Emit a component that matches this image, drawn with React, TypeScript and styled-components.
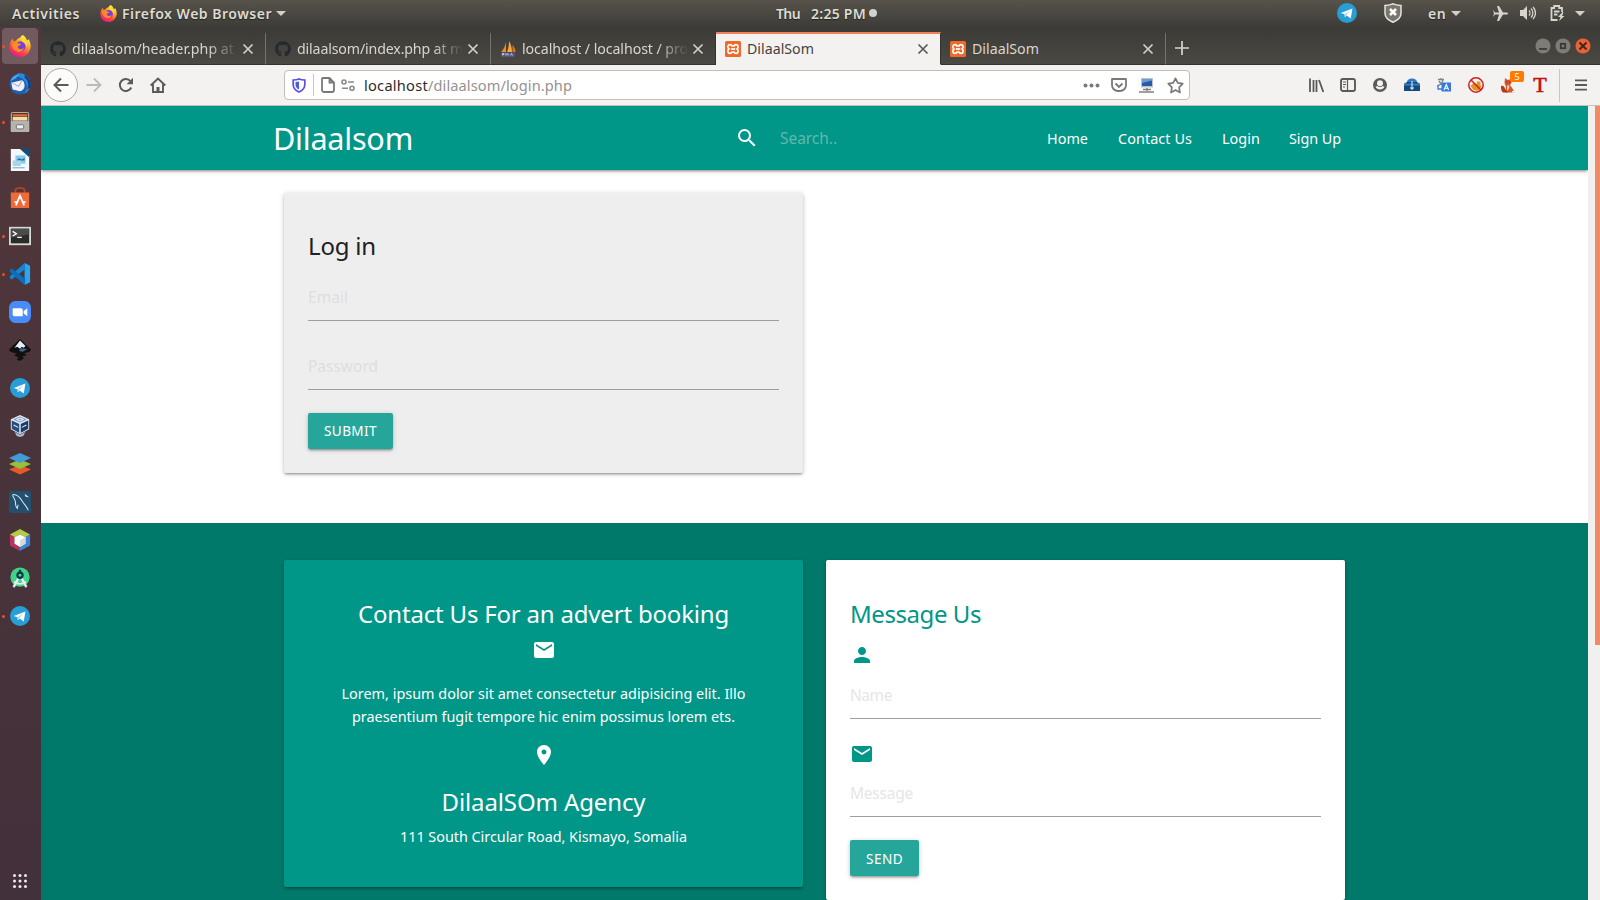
import React, { useLayoutEffect, useRef, useState } from 'react';
import styled, { createGlobalStyle } from 'styled-components';
import { FaGithub } from 'react-icons/fa';
import { MdSearch, MdEmail, MdPlace, MdPerson } from 'react-icons/md';

const Global = createGlobalStyle`
  * { box-sizing: border-box; }
  html, body { margin: 0; padding: 0; overflow: hidden; }
  body { font-family: 'Noto Sans', 'Open Sans', sans-serif; }
  svg { display: block; flex: none; }
`;

/* Text set to an exact measure by spreading the difference between letters. */
const FitBox = styled.span<{ $w: number }>`
  display: inline-block;
  flex: none;
  width: ${p => p.$w}px;
  white-space: pre;
  text-align: left;
`;
function Fit({ w, children }: { w: number; children: string }) {
  const ref = useRef<HTMLSpanElement>(null);
  const [spacing, setSpacing] = useState(0);
  useLayoutEffect(() => {
    const el = ref.current;
    if (el) setSpacing((w - el.getBoundingClientRect().width) / children.length);
  }, [w, children]);
  return (
    <FitBox $w={w}>
      <span ref={ref} style={{ letterSpacing: spacing }}>{children}</span>
    </FitBox>
  );
}

const Desktop = styled.div`
  width: 1600px;
  height: 900px;
  display: flex;
  flex-direction: column;
  overflow: hidden;
  background: #fff;
`;

/* ---------- GNOME top bar ---------- */
const TopBar = styled.div`
  height: 27px;
  flex: none;
  display: grid;
  grid-template-columns: 776px 1fr 263px;
  background: linear-gradient(#57534b, #3d3c38);
  color: #dfdbd2;
  font-size: 14px;
  font-weight: 600;
  line-height: 27px;
  text-shadow: 0 1px 1px rgba(0, 0, 0, 0.5);
`;
const TopGroup = styled.div<{ $pad?: number; $lift?: boolean }>`
  display: flex;
  align-items: center;
  height: ${p => (p.$lift ? 26 : 27)}px;
  line-height: ${p => (p.$lift ? 25 : 27)}px;
  padding-left: ${p => p.$pad ?? 0}px;
`;
const Gap = styled.span<{ $w: number }>`
  flex: none;
  width: ${p => p.$w}px;
`;
const Caret = styled.i`
  flex: none;
  border: 5px solid transparent;
  border-top-color: #d4d0c8;
  border-bottom: 0;
`;
const Dot = styled.i`
  width: 8px;
  height: 8px;
  border-radius: 50%;
  background: #d3d1cc;
`;

/* ---------- Dock ---------- */
const Body = styled.div`
  flex: 1;
  display: flex;
  min-height: 0;
`;
const Dock = styled.div`
  width: 41px;
  flex: none;
  display: flex;
  flex-direction: column;
  background: linear-gradient(#52383c, #4b343a 40%, #46323a 75%, #42303a);
`;
const DockItem = styled.div<{ $active?: boolean }>`
  height: 36px;
  margin: 1px 3px 1px 2px;
  flex: none;
  display: flex;
  align-items: center;
  border-radius: 4px;
  background: ${p => (p.$active ? '#725b60' : 'transparent')};
`;
const Running = styled.i<{ $on?: boolean }>`
  width: 3px;
  height: 3px;
  margin-right: 4px;
  border-radius: 50%;
  background: ${p => (p.$on ? '#e95420' : 'transparent')};
`;
const DockBottom = styled.div`
  margin-top: auto;
  height: 40px;
  padding: 14px 0 0 13px;
`;

/* ---------- Browser ---------- */
const Browser = styled.div`
  flex: 1;
  min-width: 0;
  display: flex;
  flex-direction: column;
`;
const TabStrip = styled.div`
  height: 38px;
  flex: none;
  display: flex;
  padding-top: 5px;
  background: linear-gradient(#3b3a36, #4a4944);
`;
const Tab = styled.div<{ $active?: boolean; $line?: boolean }>`
  width: 225px;
  flex: none;
  display: flex;
  align-items: center;
  padding-left: 9px;
  border-right: 1px solid ${p => (p.$active ? '#33322f' : p.$line ? '#75736d' : '#33322f')};
  border-top: 2px solid ${p => (p.$active ? '#f0805a' : 'transparent')};
  border-bottom: 1px solid ${p => (p.$active ? '#f4f2f1' : '#33322f')};
  background: ${p => (p.$active ? '#f4f2f1' : 'transparent')};
  color: ${p => (p.$active ? '#45433f' : '#d9d5cd')};
  font-size: 14.2px;
  line-height: 30px;
`;
const TabTitle = styled.div<{ $fade?: boolean }>`
  width: 166px;
  margin-left: 6px;
  flex: none;
  overflow: hidden;
  ${p => p.$fade && 'mask-image: linear-gradient(90deg, #000 82%, transparent 100%);'}
`;
const Rest = styled.div`
  flex: 1;
  display: flex;
  align-items: center;
  padding-left: 9px;
  border-bottom: 1px solid #33322f;
`;
const WindowButtons = styled.div`
  display: flex;
  gap: 4px;
  margin: -5px 9px 0 auto;
`;
const ToolBar = styled.div`
  height: 41px;
  flex: none;
  display: flex;
  align-items: center;
  padding-left: 3px;
  background: #f4f2f1;
  border-bottom: 1px solid #c4c0bc;
`;
const Back = styled.div`
  width: 34px;
  height: 34px;
  display: grid;
  place-items: center;
  border: 1px solid #aaa7a4;
  border-radius: 50%;
  background: #fbfbfa;
`;
const UrlBar = styled.div`
  width: 906px;
  height: 30px;
  flex: none;
  display: flex;
  align-items: center;
  border: 1px solid #c3bcb8;
  border-radius: 4px;
  background: #fff;
  font-size: 14.6px;
  color: #2e2c2a;
  padding-left: 7px;
`;
const Grey = styled.span`
  color: #96928f;
  display: flex;
`;
const Rule = styled.i<{ $h: number }>`
  width: 1px;
  height: ${p => p.$h}px;
  flex: none;
  background: #c9c5c2;
`;
const FoxBox = styled.div`
  position: relative;
`;
const Badge = styled.span`
  position: absolute;
  left: 9px;
  top: -7px;
  width: 14px;
  height: 11px;
  border-radius: 2px;
  background: #ff7b00;
  color: #fff;
  font-size: 9px;
  line-height: 11px;
  text-align: center;
`;
const RedT = styled.span`
  width: 14px;
  font: 400 22px/24px 'Liberation Serif', serif;
  color: #c4100e;
  -webkit-text-stroke: 0.6px #c4100e;
  text-align: center;
`;

/* ---------- Web page ---------- */
const View = styled.div`
  flex: 1;
  min-height: 0;
  display: flex;
`;
const Page = styled.div`
  width: 1547px;
  background: #fff;
  overflow: hidden;
`;
const ScrollTrack = styled.div`
  flex: 1;
  padding-left: 7px;
  background: #f2f0ef;
`;
const ScrollThumb = styled.div`
  height: 539px;
  background: #f08a67;
`;
const NavBar = styled.div`
  height: 64px;
  display: flex;
  align-items: center;
  padding-left: 232px;
  background: #009688;
  color: #fff;
  font-size: 14.4px;
  box-shadow: 0 2px 2px 0 rgba(0, 0, 0, 0.14), 0 3px 1px -2px rgba(0, 0, 0, 0.12), 0 1px 5px 0 rgba(0, 0, 0, 0.2);
`;
const Brand = styled.div`
  font-size: 30.6px;
  line-height: 64px;
`;
const SearchHint = styled.div`
  font-size: 15.5px;
  color: #62b8ac;
`;
const LinkText = styled.a`
  color: #fff;
`;
const Main = styled.div`
  height: 353px;
  padding: 23px 0 0 243px;
`;
const Footer = styled.div`
  height: 377px;
  display: flex;
  gap: 23px;
  align-items: flex-start;
  padding: 37px 0 0 243px;
  background: #00796b;
`;
const Card = styled.div<{ $bg: string; $h: number; $center?: boolean }>`
  width: 519px;
  height: ${p => p.$h}px;
  padding: ${p => (p.$center ? 34 : 33)}px 24px 0;
  display: flex;
  flex-direction: column;
  align-items: ${p => (p.$center ? 'center' : 'flex-start')};
  border-radius: 2px;
  background: ${p => p.$bg};
  color: ${p => (p.$center ? '#fff' : '#212121')};
  box-shadow: 0 2px 2px 0 rgba(0, 0, 0, 0.14), 0 3px 1px -2px rgba(0, 0, 0, 0.12), 0 1px 5px 0 rgba(0, 0, 0, 0.2);
`;
const Heading = styled.h5<{ $teal?: boolean; $top?: number }>`
  margin: ${p => p.$top ?? 0}px 0 0;
  height: 40px;
  font-size: 24px;
  font-weight: 400;
  line-height: 40px;
  ${p => p.$teal && 'color: #009688;'}
`;
const Field = styled.div<{ $top: number; $hint: string }>`
  align-self: stretch;
  height: 46px;
  margin-top: ${p => p.$top}px;
  border-bottom: 1px solid #9e9e9e;
  color: ${p => p.$hint};
  font-size: 15.5px;
  line-height: 44px;
`;
const Button = styled.button<{ $low?: boolean }>`
  height: 36px;
  margin: 23px 0 0;
  padding: ${p => (p.$low ? 1 : 0)}px 16px 0;
  border: 0;
  border-radius: 2px;
  background: #26a69a;
  color: #fff;
  font: 400 13.6px 'Noto Sans', sans-serif;
  line-height: ${p => (p.$low ? 35 : 36)}px;
  box-shadow: 0 2px 2px 0 rgba(0, 0, 0, 0.14), 0 3px 1px -2px rgba(0, 0, 0, 0.12), 0 1px 5px 0 rgba(0, 0, 0, 0.2);
`;
const IconLine = styled.div<{ $top: number; $teal?: boolean }>`
  height: 24px;
  margin-top: ${p => p.$top}px;
  color: ${p => (p.$teal ? '#009688' : '#fff')};
`;
const Para = styled.div<{ $top: number }>`
  margin-top: ${p => p.$top}px;
  display: flex;
  flex-direction: column;
  align-items: center;
  font-size: 14.4px;
  line-height: 23px;
`;

/* ---------- Icons ---------- */
const Svg = ({ s = 22, v = 24, children }: { s?: number; v?: number; children: React.ReactNode }) => (
  <svg width={s} height={s} viewBox={`0 0 ${v} ${v}`} fill="none">{children}</svg>
);

const FirefoxIcon = ({ s = 22, id }: { s?: number; id: string }) => (
  <Svg s={s}>
    <defs>
      <linearGradient id={id} x1="18" y1="2" x2="6" y2="23" gradientUnits="userSpaceOnUse">
        <stop offset="0" stopColor="#fff044" />
        <stop offset=".35" stopColor="#ffa02c" />
        <stop offset=".7" stopColor="#ff4048" />
        <stop offset="1" stopColor="#e8178a" />
      </linearGradient>
    </defs>
    <path d="M15 0c3 2 4 4 4.500 6l2-1.500C24 9 24.500 14 22 18c-2 4-6 6-10 6C5 24 0 19 .5 12.500.6 9 2 6 4 4l1 3 3-1c1-2 3-3 4-3 0 0 1-2 3-3z" fill={`url(#${id})`} />
    <circle cx="12.500" cy="12.500" r="5.600" fill="#7a3fd8" />
    <path d="M3 10c2-3 5-3 7-1l3 .5c0 2-3 2-3.500 3.500 0 2 4 4 7 1-1 4-5 5.500-8 4C5 16.500 3 14 3 10z" fill="#ff8b24" />
    <path d="M14 3c4 2 6.500 6 5.500 11 0-3-3-6-5-7-1-1-1-2.500-.5-4z" fill="#ffdc3a" />
  </Svg>
);
const ThunderbirdIcon = () => (
  <Svg>
    <circle cx="12" cy="12" r="11.500" fill="#1c5fae" />
    <path d="M9 .5c8-1 14.500 4 14.500 11.500 0 5-3 9-7 11 3-4 4-8 2-12S13 4 9 4z" fill="#2c87d6" />
    <path d="M17 5c4 3 5 8 3 13l3-2c2-6-1-11-6-14z" fill="#123e86" />
    <path d="M2.500 10.500L14 8c2 1 3 3 3 6s-2 5-5 6l-8-2z" fill="#f0f1f4" />
    <path d="M2.500 10.500l8 4L14.500 8" stroke="#aab2c2" strokeWidth="1.200" />
    <path d="M1.500 9C3 4 7 1.500 11 1.500L7 6z" fill="#4aa9ee" />
  </Svg>
);
const FilesIcon = () => (
  <Svg>
    <rect x="2" y="1" width="20" height="22" rx="2" fill="#c9c7c3" />
    <rect x="3" y="2" width="18" height="9" fill="#53331f" />
    <rect x="4" y="3.500" width="16" height="2.500" fill="#d9703a" />
    <rect x="4" y="6.500" width="16" height="4" fill="#f2dcb0" />
    <rect x="2" y="11" width="20" height="12" rx="1" fill="#b5b3b0" />
    <rect x="8" y="15" width="8" height="4.500" rx="1" fill="#eee" stroke="#6d6b69" />
  </Svg>
);
const WriterIcon = () => (
  <Svg>
    <path d="M2 0h13l7 8v16H2z" fill="#f5f8fa" />
    <path d="M12 0h10v9z" fill="#0e4f7d" />
    <rect x="7" y="7" width="11" height="9" fill="#8cc9ea" />
    <path d="M8 12.500l3-2.500 3 1.500 3-2v3z" fill="#1d6e9f" />
    <rect x="4" y="12.500" width="9" height="6" fill="#a9d5ea" />
    <path d="M4 20.500h13" stroke="#57a4cc" />
  </Svg>
);
const SoftwareIcon = () => (
  <Svg>
    <path d="M7 7V4c0-4 10-4 10 0v3" stroke="#b9421c" strokeWidth="2" />
    <path d="M2 6h20v16a1 1 0 0 1-1 1H3a1 1 0 0 1-1-1z" fill="#ee6a3a" />
    <path d="M7.500 20L12 9.500 16.500 20M6 16.500h3.500M14.500 16.500H18" stroke="#fff" strokeWidth="2" />
  </Svg>
);
const TerminalIcon = () => (
  <Svg s={22}>
    <rect x="0" y="2" width="24" height="20" fill="#d9d9d6" />
    <rect x="2" y="4" width="20" height="16" fill="#2b2b2b" />
    <path d="M2 4h20v6L2 14z" fill="#4b4b4a" />
    <path d="M4 7l4 2.500L4 12M9 13.500h5" stroke="#fff" strokeWidth="1.500" />
  </Svg>
);
const CodeIcon = () => (
  <Svg>
    <path d="M17 0l6 3v18l-6 3z" fill="#2aa5ee" />
    <path d="M17 0L1 14.500v2L3 18 18 6.500z" fill="#1485d2" />
    <path d="M17 24L1 9.500v-2L3 6l15 11.500z" fill="#0a70bd" />
  </Svg>
);
const ZoomIcon = () => (
  <Svg>
    <rect x="0" y="0" width="24" height="24" rx="7" fill="#4a8cf7" />
    <path d="M4 8h9a2 2 0 0 1 2 2v6.500H6a2 2 0 0 1-2-2z" fill="#fff" />
    <path d="M16 11l4-3v8.500l-4-3z" fill="#fff" />
  </Svg>
);
const InkscapeIcon = () => (
  <Svg s={22}>
    <path d="M12 0l11.500 11c1 2-1 3-3 3.500l-4 1 3 2-5 1.500 2 2-5 3-3-2 2-2-5-2 3-2-5-1.500C2 14-.5 13 .5 11z" fill="#101010" />
    <path d="M12 1.500L18 7.500l-2 2-2-1-2 2-3-2-3 1z" fill="#e7edf5" />
    <path d="M13 10l7 1-5 3-4-1z" fill="#44648e" />
  </Svg>
);
const TelegramIcon = ({ s = 20 }: { s?: number }) => (
  <Svg s={s}>
    <circle cx="12" cy="12" r="12" fill="#279fd6" />
    <path d="M4.500 12L18.500 6.500 16.500 18.500 11.500 15 9.500 17 9 13.500z" fill="#fff" />
    <path d="M9 13.500L16 8.500 11 15l-1.500 2z" fill="#b9d9ea" />
  </Svg>
);
const TelegramDockIcon = () => (
  <svg width="22" height="22" viewBox="-1.200 -1.200 26.400 26.400" fill="none">
    <circle cx="12" cy="12" r="12" fill="#279fd6" />
    <path d="M4.500 12L18.500 6.500 16.500 18.500 11.500 15 9.500 17 9 13.500z" fill="#fff" />
    <path d="M9 13.500L16 8.500 11 15l-1.500 2z" fill="#b9d9ea" />
  </svg>
);
const VirtualBoxIcon = () => (
  <Svg>
    <path d="M12 0l10 4.500v11L12 21 2 15.500v-11z" fill="#dfe7f2" />
    <path d="M12 10L3 6v9l9 5z" fill="#274d80" /><path d="M12 10l9-4v9l-9 5z" fill="#1c3a66" />
    <path d="M12 1.500l7.500 3.300L12 8.200 4.500 4.800z" fill="#7f9cc4" />
    <path d="M12 9.500V20" stroke="#e8eef7" strokeWidth="1.600" />
    <path d="M5 11l5 2.500M14 13.500l5-2.500M8.500 4.800L12 3.300l3.500 1.500L12 6.500z" stroke="#e8eef7" strokeWidth="1.200" />
    <path d="M6 18.500l6 3 6-3-2.500 4.500-3.500 1-3.500-1z" fill="#a8bbd6" />
  </Svg>
);
const StackIcon = () => (
  <Svg>
    <path d="M12 13l12 5-12 5.500L0 18z" fill="#e5582b" />
    <path d="M12 7l12 5-12 5.500L0 12z" fill="#94c23b" />
    <path d="M12 0l12 5.500L12 11 0 5.500z" fill="#3f9bd9" />
  </Svg>
);
const WorkbenchIcon = () => (
  <Svg s={22}>
    <rect width="24" height="24" rx="3" fill="#24506f" />
    <path d="M4 4c6-1 9 5 11 8s4 4 6 9M4 4c0 3 3 5 3 8s0 5 2 7l1-4" stroke="#dfe8ee" strokeWidth="1.100" />
    <path d="M17 3l5 4-4-1z" fill="#fff" />
  </Svg>
);
const CubeIcon = () => (
  <Svg>
    <path d="M12 0l11 6-5 3-6-3-6 3-5-3z" fill="#b3cb45" />
    <path d="M1 6l5 3v7l6 3.500V24L1 18z" fill="#b8345c" />
    <path d="M23 6l-5 3v7l-6 3.500V24l11-6z" fill="#3b85d8" />
    <path d="M12 6l6 3v7l-6 3.500L6 16V9z" fill="#fff" />
    <path d="M12 12l6-3v7l-6 3.500z" fill="#d9d9d9" />
  </Svg>
);
const AndroidStudioIcon = () => (
  <Svg>
    <circle cx="12" cy="11" r="10.500" fill="#41d488" />
    <path d="M12 9L5 22M12 9l7 13" stroke="#e3edf0" strokeWidth="2.600" />
    <path d="M5.500 16c4 3 9 3 13 0" stroke="#e3edf0" strokeWidth="2" />
    <circle cx="12" cy="9" r="4" fill="#083b4a" /><circle cx="12" cy="9" r="1.600" fill="#4bd48c" />
    <path d="M12 3v3" stroke="#083b4a" strokeWidth="2.500" />
  </Svg>
);

const CloseX = ({ c }: { c: string }) => (
  <Svg s={12} v={12}><path d="M1.500 1.500l9 9M10.500 1.500l-9 9" stroke={c} strokeWidth="1.700" /></Svg>
);
const XamppIcon = () => (
  <Svg s={16} v={16}>
    <rect width="16" height="16" rx="1.500" fill="#f1692a" />
    <path
      d="M5 3.600C6.200 3.600 6.800 4.300 7 5h2c.2-.7.800-1.400 2-1.400 2.600 0 2.800 3.300 1 4.400 1.800 1.100 1.600 4.400-1 4.400-1.200 0-1.800-.7-2-1.400H7c-.2.700-.8 1.400-2 1.400-2.600 0-2.800-3.300-1-4.400-1.800-1.100-1.600-4.400 1-4.400z"
      stroke="#fff" strokeWidth="1.700" strokeLinejoin="round"
    />
    <path d="M5.800 8h4.400" stroke="#fff" strokeWidth="1.700" />
  </Svg>
);
const PmaIcon = () => (
  <Svg s={16} v={16}>
    <path d="M6 1v10H1c2-2 4-5 5-10z" fill="#f08c1d" />
    <path d="M9 0c2 3 3 7 3 11H7C8.500 8 9 4 9 0z" fill="#f7a83a" />
    <path d="M12.500 4c2 2 3 4 3 7h-3z" fill="#d9760f" />
    <path d="M1 11.500h14.500L14.500 16h-13z" fill="#55577f" />
    <path d="M2.500 14.500V12.500h1.500v1H2.500M6 14.500v-2l1 1 1-1v2M10.500 14.500l1-2 1 2" stroke="#c9c9e0" strokeWidth=".9" />
  </Svg>
);
const WinButton = ({ kind }: { kind: 'min' | 'max' | 'close' }) => (
  <Svg s={16} v={16}>
    <circle cx="8" cy="8" r="7.800" fill={kind === 'close' ? '#ea6236' : '#7e7c76'} stroke="#353431" strokeWidth=".4" />
    {kind === 'min' && <path d="M4 11h8" stroke="#3a3935" strokeWidth="1.800" />}
    {kind === 'max' && <rect x="5.800" y="5.800" width="4.400" height="4.400" stroke="#3a3935" strokeWidth="1.800" />}
    {kind === 'close' && <path d="M4.500 4.500l7 7M11.500 4.500l-7 7" stroke="#3b2a20" strokeWidth="2" />}
  </Svg>
);

const dock: [React.ReactNode, boolean][] = [
  [<FirefoxIcon id="ffDock" />, true],
  [<ThunderbirdIcon />, false],
  [<FilesIcon />, true],
  [<WriterIcon />, false],
  [<SoftwareIcon />, false],
  [<TerminalIcon />, true],
  [<CodeIcon />, true],
  [<ZoomIcon />, false],
  [<InkscapeIcon />, false],
  [<TelegramDockIcon />, false],
  [<VirtualBoxIcon />, false],
  [<StackIcon />, false],
  [<WorkbenchIcon />, false],
  [<CubeIcon />, false],
  [<AndroidStudioIcon />, false],
  [<TelegramDockIcon />, true],
];

function SystemBar() {
  return (
    <TopBar>
      <TopGroup $pad={12}>
        <Fit w={68}>Activities</Fit>
        <Gap $w={20} />
        <FirefoxIcon s={17} id="ffTop" />
        <Gap $w={5} />
        <Fit w={150}>Firefox Web Browser</Fit>
        <Gap $w={4} />
        <Caret />
      </TopGroup>
      <TopGroup $lift>
        <Fit w={24}>Thu</Fit>
        <Gap $w={11} />
        <Fit w={55}>2:25 PM</Fit>
        <Gap $w={3} />
        <Dot />
      </TopGroup>
      <TopGroup $lift>
        <TelegramIcon />
        <Gap $w={27} />
        <svg width="18" height="20" viewBox="0 0 18 20" fill="none">
          <path d="M1 2.500C5 2.500 7 1.500 9 .8c2 .7 4 1.700 8 1.700v8c0 4-4 7-8 8.700C5 17.500 1 14.500 1 10.500z" fill="#78766f" stroke="#e6e4df" strokeWidth="1.500" />
          <path d="M6 6l6 6M12 6l-6 6" stroke="#fff" strokeWidth="2.600" />
        </svg>
        <Gap $w={26} />
        <TopGroup><Fit w={18}>en</Fit></TopGroup>
        <Gap $w={5} />
        <Caret />
        <Gap $w={32} />
        <Svg s={15} v={15}>
          <path d="M0 4l2 2.500h4L4 0h2l4 6.500h3.500c2 0 2 2 0 2H10L6 15H4l2-6.500H2L0 11l1-3.500z" fill="#d8d5cf" />
        </Svg>
        <Gap $w={12} />
        <Svg s={16} v={16}>
          <path d="M0 5h3l4-4v14l-4-4H0z" fill="#d8d5cf" />
          <path d="M9 5.500c1.300 1.300 1.300 3.700 0 5M11 3.500c2.500 2.500 2.500 6.500 0 9M13 2c3.300 3.500 3.300 8.500 0 12" stroke="#d8d5cf" strokeWidth="1.300" />
        </Svg>
        <Gap $w={14} />
        <Svg s={16} v={16}>
          <path d="M7.500 15H1.500V3h2.700V1h5v2h2.800v4M4 6.500h5.500M4 9.500h3.500" stroke="#d8d5cf" strokeWidth="1.800" />
          <path d="M12.500 7L8 12h2.500L9 16l5.500-5H12l1.500-3.500z" fill="#d8d5cf" />
        </Svg>
        <Gap $w={9} />
        <Caret />
      </TopGroup>
    </TopBar>
  );
}

function Tabs() {
  return (
    <TabStrip>
      <Tab $line>
        <FaGithub size={16} color="#24292e" />
        <TabTitle $fade><Fit w={162}>dilaalsom/header.php at</Fit></TabTitle>
        <Gap $w={4} /><CloseX c="#d3d0c9" />
      </Tab>
      <Tab $line>
        <FaGithub size={16} color="#24292e" />
        <TabTitle $fade><Fit w={166}>dilaalsom/index.php at m</Fit></TabTitle>
        <Gap $w={4} /><CloseX c="#d3d0c9" />
      </Tab>
      <Tab>
        <PmaIcon />
        <TabTitle $fade><Fit w={166}>localhost / localhost / pro</Fit></TabTitle>
        <Gap $w={4} /><CloseX c="#d3d0c9" />
      </Tab>
      <Tab $active>
        <XamppIcon />
        <TabTitle><Fit w={67}>DilaalSom</Fit></TabTitle>
        <Gap $w={4} /><CloseX c="#5b5955" />
      </Tab>
      <Tab $line>
        <XamppIcon />
        <TabTitle><Fit w={67}>DilaalSom</Fit></TabTitle>
        <Gap $w={4} /><CloseX c="#d3d0c9" />
      </Tab>
      <Rest>
        <Svg s={14} v={14}><path d="M7 0v14M0 7h14" stroke="#d9d5cd" strokeWidth="1.700" /></Svg>
        <WindowButtons>
          <WinButton kind="min" /><WinButton kind="max" /><WinButton kind="close" />
        </WindowButtons>
      </Rest>
    </TabStrip>
  );
}

function Tools() {
  const ink = '#5c5a58';
  return (
    <ToolBar>
      <Back>
        <Svg s={16} v={16}><path d="M15.500 8H1.500M8 1.500L1.500 8 8 14.500" stroke={ink} strokeWidth="2" /></Svg>
      </Back>
      <Gap $w={8} />
      <Svg s={16} v={16}><path d="M.5 8h14M8 1.500L14.500 8 8 14.500" stroke="#bcb9b6" strokeWidth="1.800" /></Svg>
      <Gap $w={16} />
      <Svg s={16} v={16}>
        <path d="M13.300 10.500A6 6 0 1 1 12.500 4.200" stroke={ink} strokeWidth="2" />
        <path d="M15 .8v6.400H8.600z" fill={ink} />
      </Svg>
      <Gap $w={16} />
      <Svg s={16} v={16}>
        <path d="M.7 8.500L8 1.500l7.300 7M3 7v8h10V7" stroke={ink} strokeWidth="1.900" />
        <path d="M6.500 15v-5h3v5" fill={ink} />
      </Svg>
      <Gap $w={118} />
      <UrlBar>
        <svg width="14" height="15" viewBox="0 0 14 15" fill="none">
          <path d="M7 1c2 .8 4 1 5.800 1v4.500c0 4-2.300 6-5.800 7.500-3.500-1.500-5.800-3.500-5.800-7.500V2C3 2 5 1.800 7 1z" stroke="#5a4be8" strokeWidth="1.700" />
          <path d="M7 3.500v8C4.800 10.500 3.500 9 3.500 6.500V4C5 4 6 3.800 7 3.500z" fill="#4560e0" />
        </svg>
        <Gap $w={7} /><Rule $h={22} /><Gap $w={7} />
        <svg width="14" height="16" viewBox="0 0 14 16" fill="none">
          <path d="M1.800 1h6.700L13 5.500V13a2 2 0 0 1-2 2H3a2 2 0 0 1-2-2V2a1 1 0 0 1 .8-1zM8.500 1v4.500H13" stroke="#7b7977" strokeWidth="1.800" />
        </svg>
        <Gap $w={6} />
        <svg width="14" height="12" viewBox="0 0 14 12" fill="none" stroke="#8b8987" strokeWidth="1.600">
          <circle cx="3" cy="3" r="2" /><path d="M7 3h6M1 9.200h6" /><circle cx="11" cy="9.200" r="2" />
        </svg>
        <Gap $w={9} />
        <Fit w={64}>localhost</Fit>
        <Grey><Fit w={144}>/dilaalsom/login.php</Fit></Grey>
        <Gap $w={511} />
        <Svg s={17} v={17}>
          <circle cx="2.500" cy="8.500" r="2" fill="#7b7977" /><circle cx="8.500" cy="8.500" r="2" fill="#7b7977" /><circle cx="14.500" cy="8.500" r="2" fill="#7b7977" />
        </Svg>
        <Gap $w={11} />
        <Svg s={16} v={16}>
          <path d="M1 2h14v6a6 6 0 0 1-6 6H7a6 6 0 0 1-6-6z" stroke="#7b7977" strokeWidth="1.800" strokeLinejoin="round" />
          <path d="M4.500 6.500L8 10l3.500-3.500" stroke="#7b7977" strokeWidth="1.900" />
        </Svg>
        <Gap $w={12} />
        <Svg s={15} v={15}>
          <rect x="2" y="0" width="12" height="9.500" fill="#b9c2cb" /><rect x="3" y="1" width="10" height="7" fill="#275ba8" />
          <path d="M3 5l10-2.500V1H3z" fill="#6d9bd6" />
          <path d="M8 10v3M4 11.500h8M0 14h15" stroke="#7f8080" strokeWidth="1.400" />
        </Svg>
        <Gap $w={13} />
        <Svg s={17} v={16}>
          <path d="M8 1.200l2.100 4.400 4.700.7-3.400 3.400.8 4.900L8 12.300l-4.200 2.300.8-4.900L1.200 6.300l4.700-.7z" stroke="#7b7977" strokeWidth="1.600" strokeLinejoin="round" />
        </Svg>
      </UrlBar>
      <Gap $w={118} />
      <Svg s={16} v={16}>
        <path d="M2 1.500V15M5.500 3v12M8.500 3v12M11 3l4.300 12" stroke={ink} strokeWidth="1.800" />
      </Svg>
      <Gap $w={16} />
      <Svg s={16} v={16}>
        <rect x="1" y="2" width="14" height="12" rx="2" stroke={ink} strokeWidth="1.900" />
        <path d="M7.500 2v12M3 5h3M3 7.500h3M3 10h2" stroke={ink} strokeWidth="1.200" />
      </Svg>
      <Gap $w={17} />
      <Svg s={14} v={14}>
        <circle cx="7" cy="7" r="7" fill={ink} /><circle cx="7" cy="5.200" r="3" fill="#f4f2f1" />
        <path d="M2.500 8.800c1.500 3.600 7.500 3.600 9 0L9.500 8c-1 1.300-4 1.300-5 0z" fill="#f4f2f1" />
      </Svg>
      <Gap $w={17} />
      <Svg s={16} v={16}>
        <path d="M3 5.500c0-3 2.500-4 5-4s5 1 5 4z" fill="#2d7ccb" />
        <path d="M0 7l3-2h10l3 2v7H0z" fill="#174a7c" /><path d="M0 6.500h16v2H0z" fill="#3a7fba" />
        <path d="M8 4v8M6.300 10.500L8 12.200l1.700-1.700" stroke="#bfe4ff" strokeWidth="1.200" />
      </Svg>
      <Gap $w={17} />
      <Svg s={14} v={14}>
        <path d="M1 1.500h6M4 0v2M6 2C5 5 3 7 0 8M2 3c1 3 3 4 5 5" stroke="#7d858c" strokeWidth="1.300" />
        <path d="M1 7v4h4" stroke="#3a79dd" strokeWidth="1.300" />
        <rect x="4.500" y="4.500" width="9.500" height="9" fill="#3478e0" />
        <path d="M7 12l2.300-5.500L11.600 12M7.800 10.200h3" stroke="#fff" strokeWidth="1.100" />
      </Svg>
      <Gap $w={17} />
      <Svg s={16} v={16}>
        <path d="M2.500 9l3-3 3 1 1-3 3 1v3l1 2-3 4-5-1z" fill="#e49220" />
        <circle cx="8" cy="8" r="7.200" stroke="#cf1f1f" strokeWidth="1.500" /><path d="M3 3l10 10" stroke="#cf1f1f" strokeWidth="1.500" />
      </Svg>
      <Gap $w={17} />
      <FoxBox>
        <Svg s={15} v={15}>
          <path d="M4 0l2.500 2L10 1l.5 4L9 7l3.500 5v2.500H4L5 9 3.500 5z" fill="#d9562a" />
          <path d="M0 8c2-1 4 1 4 3l3 3.500H2C0 13 0 10 0 8z" fill="#b23c16" />
          <path d="M6.500 7l2 1-1.500 4.500-1-.5zM11 13h3v1.500h-3z" fill="#f5e6dc" /><path d="M5.500 4h1M8.500 4h1" stroke="#30201a" strokeWidth="1.200" />
        </Svg>
        <Badge>5</Badge>
      </FoxBox>
      <Gap $w={17} />
      <RedT>T</RedT>
      <Gap $w={12} />
      <Rule $h={33} />
      <Gap $w={15} />
      <Svg s={12} v={13}><path d="M0 1.500h13M0 6.500h13M0 11.500h13" stroke={ink} strokeWidth="1.900" /></Svg>
    </ToolBar>
  );
}

export default function App() {
  return (
    <Desktop>
      <Global />
      <SystemBar />
      <Body>
        <Dock>
          {dock.map(([icon, on], i) => (
            <DockItem key={i} $active={i === 0}><Running $on={on} />{icon}</DockItem>
          ))}
          <DockBottom>
            <Svg s={14} v={14}>
              {[1.5, 7, 12.5].map(y => [1.5, 7, 12.5].map(x => <circle key={`${x}-${y}`} cx={x} cy={y} r="1.500" fill="#f0ecec" />))}
            </Svg>
          </DockBottom>
        </Dock>
        <Browser>
          <Tabs />
          <Tools />
          <View>
            <Page>
              <NavBar>
                <Brand><Fit w={140}>Dilaalsom</Fit></Brand>
                <Gap $w={322} />
                <MdSearch size={24} />
                <Gap $w={21} />
                <SearchHint><Fit w={57}>Search..</Fit></SearchHint>
                <Gap $w={210} />
                <LinkText><Fit w={41}>Home</Fit></LinkText>
                <Gap $w={30} />
                <LinkText><Fit w={74}>Contact Us</Fit></LinkText>
                <Gap $w={30} />
                <LinkText><Fit w={38}>Login</Fit></LinkText>
                <Gap $w={29} />
                <LinkText><Fit w={52}>Sign Up</Fit></LinkText>
              </NavBar>
              <Main>
                <Card $bg="#eeeeee" $h={280}>
                  <Heading><Fit w={68}>Log in</Fit></Heading>
                  <Field $top={9} $hint="#dedede"><Fit w={40}>Email</Fit></Field>
                  <Field $top={23} $hint="#dedede"><Fit w={70}>Password</Fit></Field>
                  <Button><Fit w={53}>SUBMIT</Fit></Button>
                </Card>
              </Main>
              <Footer>
                <Card $bg="#009688" $h={327} $center>
                  <Heading><Fit w={371}>Contact Us For an advert booking</Fit></Heading>
                  <IconLine $top={4}><MdEmail size={24} /></IconLine>
                  <Para $top={20}>
                    <Fit w={404}>Lorem, ipsum dolor sit amet consectetur adipisicing elit. Illo</Fit>
                    <Fit w={383}>praesentium fugit tempore hic enim possimus lorem ets.</Fit>
                  </Para>
                  <IconLine $top={15}><MdPlace size={24} /></IconLine>
                  <Heading $top={15}><Fit w={204}>DilaalSOm Agency</Fit></Heading>
                  <Para $top={3}><Fit w={287}>111 South Circular Road, Kismayo, Somalia</Fit></Para>
                </Card>
                <Card $bg="#ffffff" $h={340}>
                  <Heading $teal $top={1}><Fit w={131}>Message Us</Fit></Heading>
                  <IconLine $top={9} $teal><MdPerson size={24} /></IconLine>
                  <Field $top={6} $hint="#e6e6e6"><Fit w={42}>Name</Fit></Field>
                  <IconLine $top={23} $teal><MdEmail size={24} /></IconLine>
                  <Field $top={5} $hint="#e6e6e6"><Fit w={63}>Message</Fit></Field>
                  <Button $low><Fit w={37}>SEND</Fit></Button>
                </Card>
              </Footer>
            </Page>
            <ScrollTrack><ScrollThumb /></ScrollTrack>
          </View>
        </Browser>
      </Body>
    </Desktop>
  );
}
